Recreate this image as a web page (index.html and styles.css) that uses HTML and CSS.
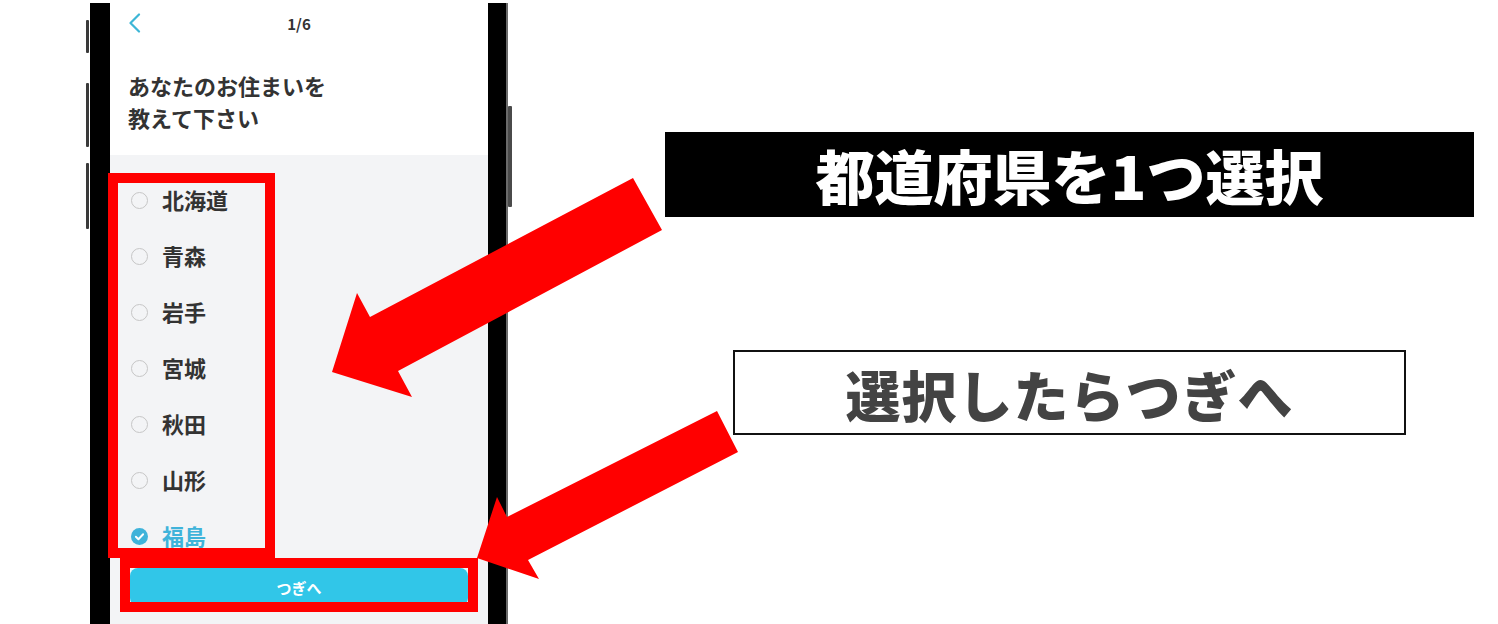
FILE: index.html
```html
<!DOCTYPE html>
<html lang="ja">
<head>
<meta charset="utf-8">
<title>お住まい選択</title>
<link rel="stylesheet" href="styles.css">
</head>
<body>
<div class="stage">
  <div class="phone">
    <span class="side-btn side-btn--l1"></span>
    <span class="side-btn side-btn--l2"></span>
    <span class="side-btn side-btn--l3"></span>
    <span class="side-btn side-btn--r1"></span>
    <div class="screen">
      <header class="topbar">
        <svg class="back" width="13" height="20" viewBox="0 0 13 20"><path d="M11 1.5 L2.5 10 L11 18.5"/></svg>
        <span class="step">1/6</span>
        <span></span>
      </header>
      <h1 class="title">あなたのお住まいを<br>教えて下さい</h1>
      <div class="panel">
        <ul class="options">
          <li class="option"><span class="radio"></span><span class="option-label">北海道</span></li>
          <li class="option"><span class="radio"></span><span class="option-label">青森</span></li>
          <li class="option"><span class="radio"></span><span class="option-label">岩手</span></li>
          <li class="option"><span class="radio"></span><span class="option-label">宮城</span></li>
          <li class="option"><span class="radio"></span><span class="option-label">秋田</span></li>
          <li class="option"><span class="radio"></span><span class="option-label">山形</span></li>
          <li class="option option--checked">
            <svg class="check" width="17" height="17" viewBox="0 0 16 16"><circle cx="8" cy="8" r="8"/><path d="M4.6 8.2 L7 10.6 L11.4 5.9"/></svg>
            <span class="option-label">福島</span>
          </li>
        </ul>
        <div class="footer"><button class="next" type="button">つぎへ</button></div>
      </div>
    </div>
  </div>
  <div class="notes">
    <div class="note note--dark">都道府県を1つ選択</div>
    <div class="note note--light">選択したらつぎへ</div>
  </div>
</div>
<div class="mark mark--list"></div>
<div class="mark mark--button"></div>
<svg class="arrows" width="1498" height="624" viewBox="0 0 1498 624">
  <polygon points="633,178 662,230 398,371 412,397 332,372 357,293 370,317"/>
  <polygon points="717,411 738,452 528,560 539,579 477,558 497,497 507,517"/>
</svg>
</body>
</html>
```
FILE: styles.css
```css
* { box-sizing: border-box; }
html, body {
  margin: 0;
  padding: 0;
}
body {
  width: 1498px;
  height: 624px;
  overflow: hidden;
  background: #fff;
  position: relative;
  font-family: "Noto Sans CJK JP", "Noto Sans", sans-serif;
  color: #333;
}
.stage {
  display: flex;
  align-items: flex-start;
}
.phone {
  position: relative;
  margin: 3px 0 0 90px;
  width: 416px;
  height: 621px;
  border-left: 20px solid #000;
  border-right: 18px solid #000;
  box-shadow: 2px 0 0 #6a6a6a;
}
.side-btn {
  position: absolute;
  width: 3px;
  background: #3a3a3a;
  border-radius: 1px;
}
.side-btn--l1 { left: -24px; top: 17px; height: 33px; }
.side-btn--l2 { left: -24px; top: 80px; height: 64px; }
.side-btn--l3 { left: -24px; top: 160px; height: 66px; }
.side-btn--r1 { right: -24px; top: 103px; height: 101px; width: 4px; background: #4a4a4a; }
.screen {
  display: flex;
  flex-direction: column;
  height: 100%;
  overflow: hidden;
  background: #fff;
}
.topbar {
  display: grid;
  grid-template-columns: 1fr auto 1fr;
  align-items: center;
  height: 40px;
  padding: 0 18px;
}
.back {
  fill: none;
  stroke: #3db6d6;
  stroke-width: 2.2;
  stroke-linecap: round;
  stroke-linejoin: round;
}
.step {
  font-size: 15px;
  font-weight: 700;
  color: #333;
}
.title {
  margin: 26px 0 22px;
  padding: 0 18px;
  font-size: 22px;
  line-height: 32px;
  font-weight: 700;
  color: #333;
}
.panel {
  flex: 1;
  background: #f3f4f6;
  display: flex;
  flex-direction: column;
}
.options {
  list-style: none;
  margin: 0;
  padding: 16px 0 0 21px;
}
.option {
  display: flex;
  align-items: center;
  height: 56px;
}
.radio {
  flex: 0 0 17px;
  width: 17px;
  height: 17px;
  border: 1.5px solid #c6c6c6;
  border-radius: 50%;
  margin: 2px 14px 0 0;
}
.check {
  flex: 0 0 17px;
  margin: 2px 14px 0 0;
}
.check circle { fill: #3fb3da; }
.check path {
  fill: none;
  stroke: #fff;
  stroke-width: 1.8;
  stroke-linecap: round;
  stroke-linejoin: round;
}
.option-label {
  font-size: 22px;
  font-weight: 700;
  color: #333;
}
.option--checked .option-label { color: #3fb3da; }
.footer {
  padding: 5px 20px 0;
}
.next {
  display: block;
  width: 100%;
  height: 38px;
  border: 0;
  border-radius: 8px;
  background: #31c6e8;
  color: #fff;
  font-family: "Noto Sans CJK JP", "Noto Sans", sans-serif;
  font-size: 15px;
  font-weight: 700;
  padding: 0;
}
.notes {
  margin-left: 159px;
  padding-top: 132px;
  width: 809px;
  display: flex;
  flex-direction: column;
  align-items: center;
}
.note {
  display: flex;
  align-items: center;
  justify-content: center;
  height: 85px;
  white-space: nowrap;
}
.note--dark {
  width: 809px;
  background: #000;
  color: #fff;
  font-size: 59px;
  font-weight: 900;
}
.note--light {
  width: 673px;
  margin-top: 133px;
  border: 2px solid #111;
  background: #fff;
  color: #434343;
  font-size: 55px;
  font-weight: 900;
  letter-spacing: 1px;
}
.mark {
  position: absolute;
  border: 10px solid #ff0000;
}
.mark--list { left: 108px; top: 173px; width: 167px; height: 385px; }
.mark--button { left: 120px; top: 558px; width: 358px; height: 54px; }
.arrows {
  position: absolute;
  left: 0;
  top: 0;
  fill: #ff0000;
  pointer-events: none;
}
```
